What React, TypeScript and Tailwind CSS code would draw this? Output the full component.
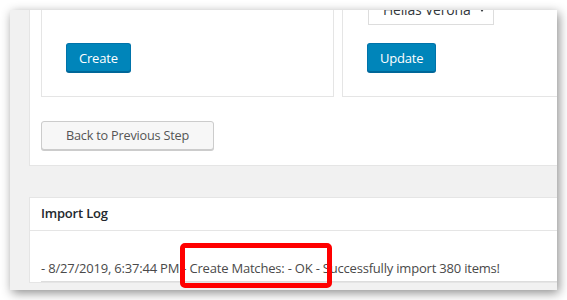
function BlueButton({ label }: { label: string }) {
  return (
    <button className="h-[29px] px-[12px] pt-[1px] rounded-[3px] bg-[#0085ba] border border-[#0073aa] border-b-[#006799] shadow-[0_1px_0_#006799] text-white text-[13px] tracking-[-0.2px] leading-none">
      {label}
    </button>
  )
}

export default function App() {
  return (
    <div className="min-h-screen bg-white pt-[10px] pl-[10px] font-['Open_Sans',sans-serif]">
      <div className="relative w-[547px] h-[280px] overflow-hidden bg-[#f1f1f1] shadow-[2px_3px_10px_rgba(0,0,0,0.45)]">
        <div className="w-[700px] ml-[19px] -mt-[40px]">
          {/* Top panel */}
          <div className="bg-white border border-[#e5e5e5] pt-[12px] pl-[11px] pb-[15px]">
            <div className="flex gap-[8px]">
              <div className="w-[293px] border border-[#e5e5e5] flex flex-col justify-end pl-[24px] pb-[24px]">
                <div>
                  <BlueButton label="Create" />
                </div>
              </div>
              <div className="w-[320px] border border-[#e5e5e5] pt-[13px] pl-[25px] pb-[24px]">
                <div className="w-[126px] h-[28px] border border-[#ddd] flex items-center justify-between pl-[14px] pr-[9px] pb-[3px] text-[14px] tracking-[-0.2px] text-[#32373c]">
                  <span>Hellas Verona</span>
                  <span className="w-0 h-0 border-l-[2px] border-r-[2px] border-t-[3px] border-l-transparent border-r-transparent border-t-[#32373c] mt-[2px]" />
                </div>
                <div className="mt-[18px] -ml-[1px]">
                  <BlueButton label="Update" />
                </div>
              </div>
            </div>
            <button className="mt-[24px] h-[29px] w-[173px] rounded-[3px] bg-[#f7f7f7] border border-[#ccc] shadow-[0_1px_0_#ccc] text-[#555] text-[12.7px] tracking-[-0.2px] leading-none">
              Back to Previous Step
            </button>
          </div>

          {/* Import log panel */}
          <div className="mt-[31px] bg-white border border-[#e5e5e5]">
            <div className="h-[33px] flex items-center pl-[11px] border-b border-[#e5e5e5] text-[13px] tracking-[-0.2px] font-semibold text-[#23282d]">
              Import Log
            </div>
            <div className="pt-[27px] pl-[11px]">
              <div className="w-[517px] border-b border-[#ddd] pb-[3px] text-[13px] tracking-[-0.2px] text-[#4a4a4a] leading-[20px]">
                - 8/27/2019, 6:37:44 PM - Create Matches: - OK - Successfully import 380 items!
              </div>
            </div>
          </div>
        </div>

        {/* Red highlight */}
        <div className="absolute left-[170px] top-[233px] w-[152px] h-[45px] border-[5px] border-[#ff0000] rounded-[5px]" />
      </div>
    </div>
  )
}
